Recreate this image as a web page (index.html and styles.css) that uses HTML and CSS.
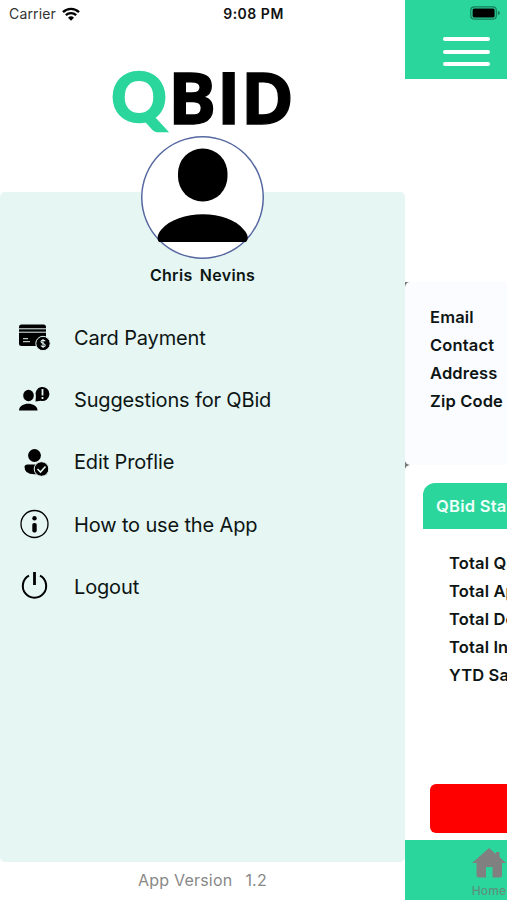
FILE: index.html
```
<!DOCTYPE html>
<html lang="en">
<head>
    <meta charset="UTF-8">
    <meta name="viewport" content="width=device-width, initial-scale=1.0">
    <title>QBid</title>
    <link rel="stylesheet" href="styles.css">
</head>
<body>
    <div class="screen">
        <div class="status-bar">
            <div class="carrier">
                <span>Carrier</span>
                <svg width="18" height="14" viewBox="0 0 18 14">
                    <path d="M1 5.2C5.5 .8 12.500 .8 17 5.2" fill="none" stroke="#000" stroke-width="2.400"/>
                    <path d="M3.800 8.200C6.800 5.300 11.200 5.300 14.200 8.200" fill="none" stroke="#000" stroke-width="2.300"/>
                    <path d="M6 10.700Q9 8 12 10.700L9 13.700Z"/>
                </svg>
            </div>
            <span class="time">9:08 PM</span>
            <svg class="battery" width="31" height="14" viewBox="0 0 31 14">
                <rect x=".8" y=".8" width="25.500" height="12.400" rx="3.500" fill="none" stroke="#167d5b" stroke-width="1.200"/>
                <rect x="2.600" y="2.600" width="22" height="8.800" rx="1.500"/>
                <path d="M27.800 4.800Q30 5.500 30 7T27.800 9.200Z" fill="#167d5b"/>
            </svg>
        </div>

        <div class="drawer">
            <div class="logo"><span>Q</span>BID</div>
            <div class="panel">
                <div class="avatar">
                    <svg width="123" height="123" viewBox="0 0 123 123">
                        <rect x="37" y="12.500" width="49.500" height="53" rx="24.500" ry="25"/>
                        <path d="M18 106C15.500 103 16.500 98 20 94C37 73 87 73 103 94C107 98 108 103 105 106Z"/>
                    </svg>
                </div>
                <div class="name">Chris Nevins</div>
                <ul class="menu">
                    <li>
                        <svg width="32" height="32" viewBox="0 0 32 32">
                            <rect x="0" y="3.500" width="27" height="21.500" rx="2.500"/>
                            <path d="M0 7.800H27M0 11.200H27" stroke="#e5f6f3" stroke-width="1"/>
                            <path d="M4 17.700H9M4 20.700H11" stroke="#e5f6f3" stroke-width="1"/>
                            <circle cx="24" cy="22.500" r="7.200" stroke="#e5f6f3" stroke-width="1"/>
                            <path d="M26.200 20.300C25.300 18.800 22 19 22 20.800C22 23 26.200 22 26.200 24.200C26.200 26.100 22.800 26.300 21.900 24.600M24 18V27.100" fill="none" stroke="#e5f6f3" stroke-width="1.100"/>
                        </svg>
                        <span>Card Payment</span>
                    </li>
                    <li>
                        <svg width="32" height="32" viewBox="0 0 32 32">
                            <ellipse cx="9.500" cy="12.500" rx="5.300" ry="5.800"/>
                            <path d="M0 27.500C0 18.500 18.500 18.500 18.500 27.500Z"/>
                            <path d="M16.500 18.500L16.900 13.500A7 7 0 1 1 21.700 17.800Z"/>
                            <path d="M23.500 6V12.500M23.500 14V16" stroke="#e5f6f3" stroke-width="1.800"/>
                        </svg>
                        <span>Suggestions for QBid</span>
                    </li>
                    <li>
                        <svg width="32" height="32" viewBox="0 0 32 32">
                            <circle cx="15.500" cy="9.500" r="6.400"/>
                            <path d="M5.500 21Q5.500 18.500 8.500 18.500H22V28.300H15Q5.500 28.300 5.500 21Z"/>
                            <circle cx="22.500" cy="23" r="7.300" stroke="#e5f6f3"/>
                            <path d="M18.500 23L21.500 26L26.500 20.500" fill="none" stroke="#e5f6f3" stroke-width="1.600"/>
                        </svg>
                        <span>Edit Proflie</span>
                    </li>
                    <li>
                        <svg width="32" height="32" viewBox="0 0 32 32">
                            <circle cx="15.500" cy="16" r="13.500" fill="none" stroke="#000" stroke-width="1.300"/>
                            <circle cx="15.500" cy="10.300" r="2.200"/>
                            <rect x="13.300" y="15" width="4.400" height="9.500" rx="1.800"/>
                        </svg>
                        <span>How to use the App</span>
                    </li>
                    <li>
                        <svg width="32" height="32" viewBox="0 0 32 32">
                            <path d="M10 5.700A11.700 11.700 0 1 0 21 5.700" fill="none" stroke="#000" stroke-width="2"/>
                            <path d="M15.500 2V15" stroke="#000" stroke-width="2.800"/>
                        </svg>
                        <span>Logout</span>
                    </li>
                </ul>
            </div>
            <div class="version"><span>App Version</span><span>1.2</span></div>
        </div>

        <div class="page">
            <div class="header">
                <div class="burger"><i></i><i></i><i></i></div>
            </div>
            <div class="info">
                <svg class="corner corner-top" width="5" height="5" viewBox="0 0 5 5"><path d="M0 0H5Q1 0 0 5Z"/></svg>
                <p>Email</p>
                <p>Contact</p>
                <p>Address</p>
                <p>Zip Code</p>
                <svg class="corner corner-bottom" width="5" height="8" viewBox="0 0 5 8"><path d="M0 0Q1 3.500 5 4Q1 4.500 0 8Z"/></svg>
            </div>
            <div class="stats">
                <div class="stats-title">QBid Stats</div>
                <p>Total QBids</p>
                <p>Total Approved</p>
                <p>Total Declined</p>
                <p>Total Invoice</p>
                <p>YTD Savings</p>
            </div>
            <div class="red-button"></div>
            <div class="tab-bar">
                <div class="tab">
                    <svg width="34" height="30" viewBox="0 0 34 30">
                        <path d="M17 0L24 6V4H27.500V9L34 15H30V27Q30 29.500 27.500 29.500H20.500V19H14V29.500H7Q4.500 29.500 4.500 27V15H0Z" fill="#808080"/>
                    </svg>
                    <span>Home</span>
                </div>
            </div>
        </div>
    </div>
</body>
</html>
```
FILE: styles.css
```
* {
    box-sizing: border-box;
}
body {
    margin: 0;
    background: white;
    font-family: Inter, "Liberation Sans", sans-serif;
    color: #0d1514;
}
p, ul {
    margin: 0;
    padding: 0;
}
svg {
    display: block;
    flex: none;
}
.screen {
    position: relative;
    display: flex;
    width: 507px;
    height: 900px;
    overflow: hidden;
}
/* the status bar lies over both the drawer and the page */
.status-bar {
    position: absolute;
    z-index: 2;
    top: 0;
    left: 0;
    width: 507px;
    height: 27px;
    padding: 0 6px 0 9px;
    display: grid;
    grid-template-columns: 1fr auto 1fr;
    align-items: center;
    font-size: 14px;
}
.carrier {
    display: flex;
    align-items: center;
    gap: 6px;
    letter-spacing: 0.15px;
    color: #333;
}
.time {
    margin-left: -3px;
    font-weight: 600;
    letter-spacing: 0.5px;
    color: #111;
}
.battery {
    justify-self: end;
    margin-top: -1px;
}
.drawer {
    width: 405px;
    flex: none;
    display: flex;
    flex-direction: column;
}
.logo {
    height: 192px;
    padding: 46px 0 0 111px;
    display: flex;
    font-family: "Open Sans", sans-serif;
    font-size: 72px;
    line-height: 100px;
    font-weight: 700;
    letter-spacing: 0.3px;
    color: black;
    -webkit-text-stroke: 1.3px black;
}
.logo span {
    width: 57px;
    font-family: Lato, sans-serif;
    font-size: 69px;
    font-weight: 900;
    color: #2bd69d;
    -webkit-text-stroke: 1.5px #2bd69d;
}
.panel {
    height: 670px;
    background: #e5f6f3;
    border-radius: 5px;
}
.avatar {
    width: 123px;
    height: 123px;
    margin: -56px auto 0;
    background: white;
    border-radius: 50%;
    box-shadow: inset 0 0 0 1.5px #5568a0;
}
.name {
    height: 32px;
    line-height: 32px;
    text-align: center;
    font-size: 16px;
    font-weight: 600;
    letter-spacing: 0.3px;
    word-spacing: 3px;
}
.menu {
    list-style: none;
    margin-top: 15px;
}
.menu li {
    height: 62.3px;
    padding-left: 19px;
    display: flex;
    align-items: center;
    gap: 23px;
    font-size: 20px;
    letter-spacing: -0.15px;
}
.menu span {
    padding-top: 1px;
}
.version {
    height: 38px;
    padding-bottom: 2px;
    display: flex;
    justify-content: center;
    align-items: center;
    gap: 13px;
    font-size: 16px;
    letter-spacing: 0.2px;
    color: #888;
}
.page {
    width: 102px;
    overflow: hidden;
    background: white;
}
.header {
    height: 79px;
    padding: 37px 0 0 38px;
    background: #2bd69d;
}
.burger {
    display: flex;
    flex-direction: column;
    gap: 8.5px;
    width: 47px;
}
.burger i {
    height: 4px;
    border-radius: 2px;
    background: white;
}
.info {
    position: relative;
    height: 183px;
    margin-top: 203px;
    padding: 21px 0 0 25px;
    background: #fafcff;
}
.info p, .stats p {
    height: 28px;
    line-height: 28px;
    font-size: 16.5px;
    font-weight: 600;
    letter-spacing: 0.15px;
    white-space: nowrap;
}
.corner {
    position: absolute;
    left: 0;
    fill: #777;
}
.corner-top {
    top: 0;
}
.corner-bottom {
    bottom: -4px;
}
.stats {
    width: 330px;
    height: 319px;
    margin: 18px 0 0 18px;
}
.stats-title {
    height: 46px;
    margin-bottom: 20px;
    padding-left: 13px;
    line-height: 46px;
    font-size: 16.5px;
    font-weight: 600;
    letter-spacing: 0.25px;
    color: #effff9;
    background: #2bd69d;
    border-radius: 12px 12px 0 0;
}
.stats p {
    padding-left: 26px;
}
.red-button {
    width: 330px;
    height: 49px;
    margin: -18px 0 7px 25px;
    background: #ff0000;
    border-radius: 6px;
}
.tab-bar {
    height: 60px;
    padding: 8px 0 0 67px;
    background: #2bd69d;
}
.tab {
    width: 34px;
    display: flex;
    flex-direction: column;
    align-items: center;
    font-size: 12px;
    line-height: 14px;
    font-weight: 500;
    letter-spacing: 0.2px;
    color: #5d917e;
}
.tab span {
    margin-top: 6px;
}
```
